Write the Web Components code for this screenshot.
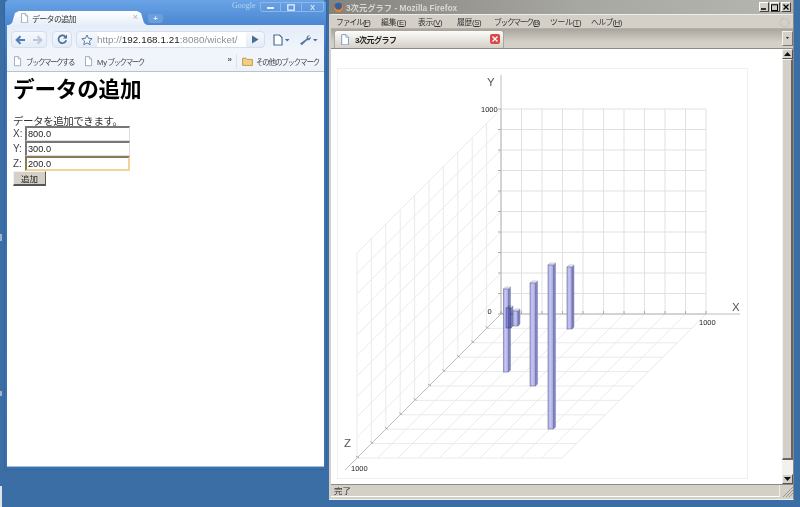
<!DOCTYPE html>
<html lang="ja"><head><meta charset="utf-8"><title>デスクトップ</title>
<style>
html,body{margin:0;height:100%;overflow:hidden;background:#3a6ea5;font-family:"Liberation Sans","Noto Sans CJK JP",sans-serif}
</style></head><body>
<x-desktop>
  <x-chrome-window>
    <x-add-form></x-add-form>
  </x-chrome-window>
  <x-firefox-window>
    <x-graph></x-graph>
  </x-firefox-window>
</x-desktop>
<script>
const JP='"Liberation Sans","Noto Sans CJK JP",sans-serif';
function def(name,html){customElements.define(name,class extends HTMLElement{
  constructor(){super();this.attachShadow({mode:'open'}).innerHTML=html;}
});}
const pageIcon=(s,c='#8b97a8')=>`<svg width="${s}" height="${s*1.15}" viewBox="0 0 10 12"><path d="M1.5.7h4.6l2.500 2.600v8H1.500z" fill="#fff" stroke="${c}" stroke-width=".9"/><path d="M6 .8v2.600h2.600" fill="#e8eef6" stroke="${c}" stroke-width=".7"/></svg>`;

def('x-desktop',`<style>
:host{display:block;position:relative;width:800px;height:507px;background:#3a6ea5;overflow:hidden;filter:blur(.3px)}
.mark{position:absolute;left:0;width:1.500px;background:#dfe4ea}
</style><slot></slot>
<div class="mark" style="top:486px;height:21px"></div>
<div class="mark" style="top:234px;height:7px;background:#9fb4cc"></div>
<div class="mark" style="top:391px;height:5px;background:#9fb4cc"></div>`);

def('x-chrome-window',`<style>
:host{position:absolute;left:5px;top:0;width:321px;height:469px;display:flex;flex-direction:column;box-sizing:border-box;padding:0 2px 2px 2px;
 background:linear-gradient(#6aa4e6 0,#4a86d2 25px,#3a72b6 60px,#3d70ad);border-radius:4px 4px 0 0;font-family:${JP};box-shadow:0 0 0 .5px #2f5c90}
.top{height:25px;position:relative;flex:none}
.google{position:absolute;left:225px;top:1px;font:8px "Liberation Serif",serif;color:#b8d2ee}
.btns{position:absolute;left:253px;top:2px;display:flex}
.btns b{display:flex;align-items:center;justify-content:center;box-sizing:border-box;height:10px;border:1px solid #8fb6e4;border-left-width:0;color:#d9e8f8;font:700 7px "Liberation Sans"}
.btns b:first-child{border-left-width:1px;border-radius:0 0 0 3px;width:21px}
.btns b:nth-child(2){width:21px}.btns b:nth-child(3){width:22px;border-radius:0 0 3px 0}
.tabs{position:absolute;left:2px;top:11px;height:14px;display:flex;align-items:flex-end}
.tab{position:relative;width:138px;height:14px;background:linear-gradient(#fff,#e6eef9);clip-path:polygon(0 100%,3px 85%,6px 15%,10px 0,calc(100% - 10px) 0,calc(100% - 6px) 15%,calc(100% - 3px) 85%,100% 100%);display:flex;align-items:center;gap:3px;padding-left:11px;box-sizing:border-box;font-size:8px;letter-spacing:-.7px;color:#333}
.tab i{position:absolute;right:9px;top:1px;font:normal 9px "Liberation Sans";color:#aab4c0;letter-spacing:0}
.plus{margin:0 0 2px 1px;width:15px;height:9px;background:#6b9edb;border-radius:0 3px 3px 3px;color:#dcebfb;font:700 8px/9px "Liberation Sans";text-align:center}
.tool{height:27px;flex:none;display:flex;align-items:center;padding:2px 0 0 4px;box-sizing:border-box;background:linear-gradient(#e3ecf8,#f2f6fc)}
.group{display:flex;height:17px;align-items:center;justify-content:space-around;border:1px solid #d3dfef;border-radius:4px;box-sizing:border-box;background:linear-gradient(#f5f8fd,#e4ecf7)}
.omni{width:189px;margin-left:4px;display:flex;align-items:center;overflow:hidden}
.omni .u{flex:1;height:15px;background:#fff;font-size:9.800px;line-height:15px;color:#222;white-space:nowrap;overflow:hidden;letter-spacing:.05px}
.omni .u span{color:#8a8f96}
.star{width:20px;display:flex;justify-content:center}
.go{width:18px;display:flex;justify-content:center}
.tool .r{display:flex;align-items:center;margin-left:8px;gap:8px}
.bm{height:20px;flex:none;display:flex;align-items:center;background:linear-gradient(#f2f6fc,#eef3fa);border-bottom:1px solid #b7c3d2;box-sizing:border-box;font-size:7.500px;letter-spacing:-1.500px;color:#444;padding-left:6px;white-space:nowrap}
.bm .it{display:flex;align-items:center;gap:4px}
.bm .my{letter-spacing:-1.450px}.bm .my em{font-style:normal;letter-spacing:0;margin-right:.5px}
.bm .more{margin-left:auto;font:700 8px "Liberation Sans";letter-spacing:0;color:#555;margin-bottom:4px}
.bm .sep{width:1px;height:15px;background:#dbe3ee;margin:0 5px 0 4px}
.bm .oth{letter-spacing:-1.200px;padding-right:5px;gap:3px}
.body{flex:1;background:#fff;border-bottom:1px solid #9dbde4}
</style>
<div class="top">
 <span class="google">Google</span>
 <div class="btns"><b><svg width="7" height="4"><path d="M0 3h7" stroke="#e4effb" stroke-width="2"/></svg></b><b><svg width="8" height="7"><rect x=".8" y=".8" width="6.400" height="5.400" fill="none" stroke="#e4effb" stroke-width="1.300"/></svg></b><b>X</b></div>
 <div class="tabs"><div class="tab">${pageIcon(9)}<span>データの追加</span><i>×</i></div><div class="plus">+</div></div>
</div>
<div class="tool">
 <div class="group" style="width:36px">
  <svg width="11" height="10" viewBox="0 0 11 10"><path d="M10 5H2.500M5.500 1.300 1.700 5l3.800 3.700" fill="none" stroke="#4f7fb4" stroke-width="2"/></svg>
  <svg width="11" height="10" viewBox="0 0 11 10"><path d="M1 5h7.500M5.500 1.300 9.300 5 5.500 8.700" fill="none" stroke="#b9c8da" stroke-width="2"/></svg>
 </div>
 <div class="group" style="width:20px;margin-left:5px">
  <svg width="11" height="11" viewBox="0 0 11 11"><path d="M9.200 6.300A3.900 3.900 0 1 1 8.200 2.600" fill="none" stroke="#4a6f96" stroke-width="1.700"/><path d="M10 .6v3.900H6.100z" fill="#4a6f96"/></svg>
 </div>
 <div class="group omni">
  <div class="star"><svg width="12" height="12" viewBox="0 0 12 12"><path d="M6 1l1.500 3.300 3.600.4-2.700 2.400.8 3.600L6 8.900l-3.200 1.800.8-3.600L.9 4.700l3.600-.4z" fill="#f4f7fb" stroke="#5c7d9e" stroke-width="1"/></svg></div>
  <div class="u"><span>http://</span>192.168.1.21<span>:8080/wicket/</span></div>
  <div class="go"><svg width="8" height="9"><path d="M1 .5 7.500 4.500 1 8.500z" fill="#486d93"/></svg></div>
 </div>
 <div class="r">
  <svg width="17" height="12" viewBox="0 0 17 12"><path d="M1 1h5.500L9 3.500V11H1z" fill="#fff" stroke="#4a6f96" stroke-width="1.200"/><path d="M12 5h4.500l-2.250 2.600z" fill="#4a6f96"/></svg>
  <svg width="20" height="12" viewBox="0 0 20 12"><path d="M12 1.200a3 3 0 0 0-3.400 3.600L2 9.600l1.800 1.600 5.300-5a3 3 0 0 0 3.700-3.500l-1.900 1.500-1.300-.9z" fill="#56789c"/><path d="M15 5h4.500l-2.250 2.600z" fill="#4a6f96"/></svg>
 </div>
</div>
<div class="bm">
 <div class="it" style="width:71px">${pageIcon(9)}<span>ブックマークする</span></div>
 <div class="it">${pageIcon(9)}<span class="my"><em>My</em>ブックマーク</span></div>
 <span class="more">»</span><span class="sep"></span>
 <div class="it oth"><svg width="11" height="9" viewBox="0 0 11 9"><path d="M.6 1.200h3.500l1 1.200h5.300v6H.6z" fill="#f3cf7e" stroke="#b08c3c" stroke-width=".8"/></svg><span>その他のブックマーク</span></div>
</div>
<div class="body"><slot></slot></div>`);

def('x-add-form',`<style>
:host{display:block;padding:5px 0 0 6px;color:#111;font-family:${JP}}
h1{margin:0;font-size:21.600px;line-height:26px;font-weight:700;color:#000;letter-spacing:-.2px}
p{margin:11px 0 0;font-size:10.500px;line-height:14px;color:#333;letter-spacing:-.45px}
.f{display:grid;grid-template-columns:12px 105px;grid-auto-rows:15px;align-items:center;margin-top:-2px;font-size:10px;color:#444}
input{box-sizing:border-box;width:105px;height:15px;margin:0;padding:0 0 0 1px;font:9.200px "Liberation Sans";color:#222;background:#fff;border:1px solid #dedede;border-top:2px solid #777;border-left:2px solid #777;outline:none}
input.on{border:2px solid #f0d49a;border-top-color:#8a7a58;border-left-color:#8a7a58}
button{display:block;box-sizing:border-box;width:33px;height:15px;margin:0;padding:0;background:#d4d0c8;border:1px solid #f4f2ee;border-right-color:#555;border-bottom:2px solid #555;font:8.500px ${JP};color:#222}
</style>
<h1>データの追加</h1>
<p>データを追加できます。</p>
<div class="f"><label>X:</label><input value="800.0"><label>Y:</label><input value="300.0"><label>Z:</label><input class="on" value="200.0"></div>
<button>追加</button>`);

const menu=[['ファイル','F',34,11,-1.05],['編集','E',26,11,-.1],['表示','V',28,11,-.35],['履歴','S',27,10,-.35],['ブックマーク','B',46,10,-1.35],['ツール','T',32,9,-.35],['ヘルプ','H',31,0,-.6]];
def('x-firefox-window',`<style>
:host{position:absolute;left:329px;top:0;width:465px;height:500px;box-sizing:border-box;display:flex;flex-direction:column;background:#d4d0c8;border-right:1px solid #888;padding:0 0 2px 2px;font-family:${JP};border-bottom:1px solid #f0eeea}
.tb{height:14px;flex:none;margin:0 0 0 -2px;display:flex;align-items:center;background:linear-gradient(90deg,#85837d,#a8a8a2 55%,#b6b6b0);color:#d8d8d4;font-size:8.300px;font-weight:700;padding-left:4px;position:relative;gap:2px;letter-spacing:0;white-space:nowrap}
.tb .w{position:absolute;right:2px;top:2px;display:flex;gap:0}
.tb .w b{width:10px;height:10px;box-sizing:border-box;margin-left:.7px;background:#d4d0c8;border:1px solid #fff;border-right-color:#444;border-bottom-color:#444;display:flex;align-items:center;justify-content:center}
.mb{height:15px;box-sizing:border-box;flex:none;display:flex;align-items:center;padding-left:5px;font-size:7.800px;color:#333;position:relative;border-bottom:1px solid #b4b0a8;border-top:1px solid #efede8}
.mb span{white-space:nowrap;flex:none}
.mb u{text-decoration:underline}
.sp{position:absolute;right:3px;top:2px}
.ts{height:20px;box-sizing:border-box;flex:none;display:flex;align-items:flex-end;background:linear-gradient(#a9a69f,#d4d0c8 70%);padding-left:3px;border-bottom:1px solid #8c8a84;position:relative}
.tab{width:170px;height:18px;box-sizing:border-box;display:flex;align-items:center;background:linear-gradient(#fdfcfa,#d4d0c8);border:1px solid #a8a59e;border-bottom:none;padding-left:5px;gap:5px;font-size:8px;font-weight:700;color:#222;position:relative;letter-spacing:-.5px;border-radius:3px 3px 0 0}
.x{position:absolute;right:3px;top:3px;width:10px;height:10px;background:#d84a4a;border-radius:2px;display:flex;align-items:center;justify-content:center}
.more{position:absolute;right:0;top:2px;width:11px;height:15px;box-sizing:border-box;background:#d4d0c8;border:1px solid #f4f2ee;border-right-color:#777;border-bottom-color:#777;display:flex;align-items:center;justify-content:center}
.mid{flex:1;display:flex;min-height:0;background:#fff}
.view{flex:1;min-width:0;overflow:hidden}
.sb{width:11px;flex:none;display:flex;flex-direction:column;background:#f3f1ec}
.sb .a{height:10px;flex:none;box-sizing:border-box;background:#d4d0c8;border:1px solid #f4f2ee;border-right-color:#555;border-bottom-color:#555;display:flex;align-items:center;justify-content:center}
.sb .t{height:401px;flex:none;box-sizing:border-box;background:#d4d0c8;border:1px solid #f4f2ee;border-right:2px solid #666;border-bottom:2px solid #666}
.sb .g{flex:1}
.st{height:13px;box-sizing:border-box;flex:none;display:flex;font-size:8.500px;color:#333;border-top:1px solid #8c8a84}
.st .a{flex:1;padding-left:3px;line-height:12px;border-bottom:1px solid #fff;border-right:1px solid #efede8}
.grip{width:13px;flex:none;position:relative;overflow:hidden}
</style>
<div class="tb">
 <svg width="11" height="11" viewBox="0 0 11 11"><circle cx="5.500" cy="5.500" r="4.800" fill="#3a5fa0"/><path d="M.9 6.800A4.800 4.800 0 0 0 10.200 6.500 4.800 4.800 0 0 0 7.800 1.500 4 4 0 0 1 8.200 6.500 3.800 3.800 0 0 1 2.200 6 3 3 0 0 1 3 2.500 4.500 4.500 0 0 0 .9 6.800z" fill="#e8842a"/></svg>
 <span>3次元グラフ - Mozilla Firefox</span>
 <div class="w"><b><svg width="6" height="6"><path d="M0 5h5" stroke="#000" stroke-width="1.500"/></svg></b><b><svg width="7" height="7"><rect x=".5" y=".8" width="6" height="5.700" fill="none" stroke="#000"/></svg></b><b style="margin-left:1.500px"><svg width="6" height="6"><path d="M.5.5l5 5M5.500.5l-5 5" stroke="#000" stroke-width="1.300"/></svg></b></div>
</div>
<div class="mb">
 ${menu.map(([t,k,w,m,l])=>`<span style="width:${w}px;margin-right:${m}px;letter-spacing:${l}px">${t}(<u>${k}</u>)</span>`).join('')}
 <svg class="sp" width="11" height="11" viewBox="0 0 11 11"><circle cx="5.500" cy="5.500" r="4.300" fill="none" stroke="#c4c0b8" stroke-width="1.600" stroke-dasharray="1.500 1"/></svg>
</div>
<div class="ts">
 <div class="tab">${pageIcon(10,'#6f8fb8')}<span>3次元グラフ</span><div class="x"><svg width="6" height="6"><path d="M.5.500l5 5M5.500.5l-5 5" stroke="#fff" stroke-width="1.200"/></svg></div></div>
 <div class="more"><svg width="5" height="3"><path d="M1 0h3L2.500 2z" fill="#222"/></svg></div>
</div>
<div class="mid">
 <div class="view"><slot></slot></div>
 <div class="sb">
  <div class="a"><svg width="7" height="4"><path d="M3.500 0 7 4H0z" fill="#111"/></svg></div>
  <div class="t"></div><div class="g"></div>
  <div class="a"><svg width="7" height="4"><path d="M0 0h7L3.500 4z" fill="#111"/></svg></div>
 </div>
</div>
<div class="st"><div class="a">完了</div><div class="grip"><svg width="13" height="12"><path d="M3 12l10-10M6 12l7-7M9 12l4-4" stroke="#999" stroke-width="1"/></svg></div></div>`);

class XGraph extends HTMLElement{
  constructor(){super();
    const S=20.5,D=14.4,X0=501,Y0=314;let g='',w='',t='';
    const line=(a,b,c,d)=>`<line x1="${a}" y1="${b}" x2="${c}" y2="${d}"/>`;
    for(let i=0;i<=10;i++){
      g+=line(X0,Y0-S*i,X0+S*10,Y0-S*i)+line(X0+S*i,Y0,X0+S*i,Y0-S*10);
      w+=line(X0-D*i,Y0+D*i,X0-D*i+S*10,Y0+D*i)+line(X0+S*i,Y0,X0+S*i-D*10,Y0+D*10);
      w+=line(X0-D*i,Y0-S*10+D*i,X0-D*i,Y0+D*i)+line(X0,Y0-S*i,X0-D*10,Y0-S*i+D*10);
      t+=line(X0-3,Y0-S*i,X0,Y0-S*i)+line(X0+S*i,Y0-3,X0+S*i,Y0)+line(X0-D*i-1,Y0+D*i-2,X0-D*i+2,Y0+D*i);
    }
    const bar=(x,w,top,bot,cls='')=>{const f=w-2;return `<g class="${cls}">
      <path d="M${x+f} ${top+2}l2 -2V${bot-2}l-2 2z" fill="#8484cc" stroke="#6a7090" stroke-width=".4"/>
      <path d="M${x} ${top+2}l2 -2h${f}l-2 2z" fill="#f4f4fc" stroke="#7c829c" stroke-width=".4"/>
      <rect x="${x}" y="${top+2}" width="${f}" height="${bot-top-2}" fill="url(#bf)" stroke="#6a7090" stroke-width=".6"/></g>`};
    this.attachShadow({mode:'open'}).innerHTML=`<style>
:host{display:block;padding:19px 0 0 6px}
svg{display:block}
text{font-family:"Liberation Sans",sans-serif}
.soft line{stroke:#e8e8e8;stroke-width:.9}
.back line{stroke:#dedede;stroke-width:.9}
.ax line{stroke:#bcbcbc;stroke-width:1}
.tk line{stroke:#a4a4a4;stroke-width:.9}
.s{font-size:7.500px;fill:#222}.b{font-size:11.500px;fill:#555}
.mul{mix-blend-mode:multiply}
</style>
<svg width="411" height="411" viewBox="337 68 411 411">
<defs><linearGradient id="bf" x1="0" x2="1" y1="0" y2="0"><stop offset="0" stop-color="#a8a8e4"/><stop offset=".4" stop-color="#c6c6f2"/><stop offset=".8" stop-color="#b0b0ea"/><stop offset="1" stop-color="#8c8cd4"/></linearGradient></defs>
<rect x="337.500" y="68.500" width="410" height="410" fill="#fff" stroke="#f0f0f0"/>
<g class="soft">${w}</g><g class="back">${g}</g>
<g class="ax">${line(501,75,501,314)}${line(501,314,740,314)}${line(501,314,345,470)}</g>
<g class="tk">${t}</g>
<text class="b" x="487" y="86">Y</text><text class="b" x="732" y="311">X</text><text class="b" x="344" y="447">Z</text>
<text class="s" x="481" y="112">1000</text><text class="s" x="487.500" y="314">0</text><text class="s" x="699" y="325">1000</text><text class="s" x="351" y="471">1000</text>
${bar(503.500,7,287,372)}${bar(506,7,306,328,'mul')}${bar(513,7,309,326)}${bar(530,7.500,281,386)}${bar(548,7.500,263,429)}${bar(567,7,265,329)}
</svg>`;
  }
}
customElements.define('x-graph',XGraph);
</script>
</body></html>
